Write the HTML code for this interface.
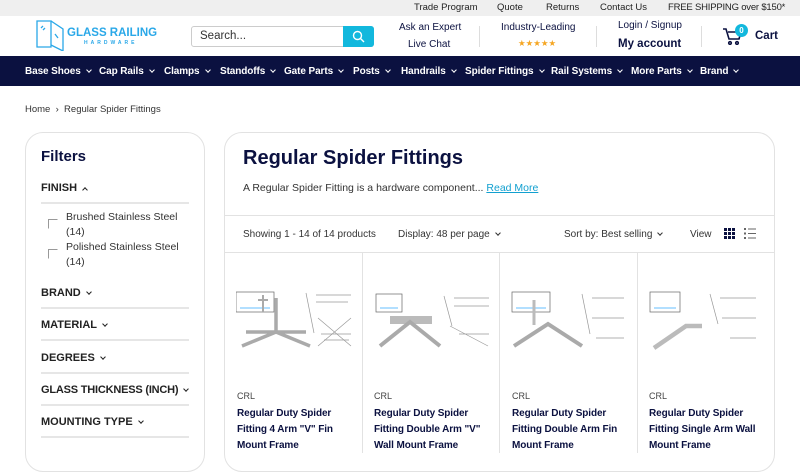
<!DOCTYPE html>
<html><head><meta charset="utf-8"><style>
*{box-sizing:border-box;margin:0;padding:0}
body{width:800px;height:450px;overflow:hidden;font-family:"Liberation Sans",Arial,sans-serif;background:#fff;color:#1a1a1a;position:relative}
.a{position:absolute;white-space:nowrap}
.top{position:absolute;left:0;top:0;width:800px;height:16px;background:#efefef;font-size:9.5px;color:#222}
.nav{position:absolute;left:0;top:56px;width:800px;height:30px;background:#0b1140;color:#fff;font-size:10px;font-weight:bold;letter-spacing:-0.1px}
.chev{display:inline-block;width:4px;height:4px;border-right:1.5px solid currentColor;border-bottom:1.5px solid currentColor;transform:rotate(45deg);margin-left:6px;position:relative;top:-2px}
.card{position:absolute;border:1px solid #e2e2e2;border-radius:18px}
.navy{color:#0b1140}
.f{font-size:11px;font-weight:bold;color:#222}
.hr{position:absolute;height:2px;background:#e6e6e6}
.cb{position:absolute;width:10px;height:10px;border:1px solid #999;border-right-color:#fff;border-bottom-color:#fff}
.pt{font-size:10px;font-weight:bold;color:#0b1140;line-height:16px;white-space:normal;width:118px;letter-spacing:-0.1px}
</style></head><body>
<div class="top">
<span class="a" style="left:414px;top:2px">Trade Program</span>
<span class="a" style="left:497px;top:2px">Quote</span>
<span class="a" style="left:546px;top:2px">Returns</span>
<span class="a" style="left:600px;top:2px">Contact Us</span>
<span class="a" style="left:668px;top:2px;letter-spacing:-0.2px">FREE SHIPPING over $150*</span>
</div>
<svg class="a" style="left:35px;top:18px" width="30" height="33" viewBox="0 0 30 33" fill="none" stroke="#2aa8e8" stroke-width="1.3"><path d="M2 3h14v26H2z"/><path d="M16 3l12 8v22l-12-6"/><path d="M6 10l2-2M8 12l2-2M20 16l3 4"/></svg>
<span class="a" style="left:67px;top:27px;font-size:11.5px;font-weight:bold;color:#2aa8e8">GLASS RAILING</span>
<span class="a" style="left:84px;top:40px;font-size:5px;letter-spacing:3px;color:#2aa8e8;font-weight:bold">HARDWARE</span>
<div class="a" style="left:191px;top:26px;width:183px;height:21px;border:1px solid #ccc;border-radius:3px"></div>
<span class="a" style="left:200px;top:30px;font-size:11.5px;color:#333">Search...</span>
<div class="a" style="left:343px;top:26px;width:31px;height:21px;background:#12b8dd;border-radius:0 3px 3px 0"></div>
<svg class="a" style="left:352px;top:30px" width="13" height="13" viewBox="0 0 13 13" fill="none" stroke="#fff" stroke-width="1.4"><circle cx="5.5" cy="5.5" r="4"/><path d="M8.5 8.5l3.5 3.5"/></svg>
<span class="a" style="left:399px;top:22px;font-size:10px;color:#0b1140">Ask an Expert</span>
<span class="a" style="left:408px;top:39px;font-size:10px;color:#0b1140">Live Chat</span>
<div class="a" style="left:479px;top:26px;width:1px;height:21px;background:#ddd"></div>
<span class="a" style="left:501px;top:22px;font-size:10px;color:#0b1140">Industry-Leading</span>
<span class="a" style="left:518px;top:38px;font-size:8.5px;color:#f5a623">★★★★★</span>
<div class="a" style="left:596px;top:26px;width:1px;height:21px;background:#ddd"></div>
<span class="a" style="left:618px;top:20px;font-size:10px;color:#0b1140">Login / Signup</span>
<span class="a" style="left:618px;top:38px;font-size:11.5px;font-weight:bold;color:#0b1140">My account</span>
<div class="a" style="left:701px;top:26px;width:1px;height:21px;background:#ddd"></div>
<svg class="a" style="left:722px;top:27px" width="20" height="18" viewBox="0 0 20 18" fill="none" stroke="#0b1140" stroke-width="1.6"><path d="M1 2h3l3 10h10l2-7H6"/><circle cx="8" cy="16" r="1.3"/><circle cx="15" cy="16" r="1.3"/></svg>
<div class="a" style="left:735px;top:24px;width:13px;height:13px;border-radius:50%;background:#12b8dd;color:#fff;font-size:8px;text-align:center;line-height:13px;font-weight:bold">0</div>
<span class="a" style="left:755px;top:30px;font-size:11.5px;font-weight:bold;color:#0b1140">Cart</span>
<div class="nav">
<span class="a" style="left:25px;top:10px">Base Shoes<i class="chev"></i></span>
<span class="a" style="left:99px;top:10px">Cap Rails<i class="chev"></i></span>
<span class="a" style="left:164px;top:10px">Clamps<i class="chev"></i></span>
<span class="a" style="left:220px;top:10px">Standoffs<i class="chev"></i></span>
<span class="a" style="left:284px;top:10px">Gate Parts<i class="chev"></i></span>
<span class="a" style="left:353px;top:10px">Posts<i class="chev"></i></span>
<span class="a" style="left:401px;top:10px">Handrails<i class="chev"></i></span>
<span class="a" style="left:465px;top:10px">Spider Fittings<i class="chev"></i></span>
<span class="a" style="left:551px;top:10px">Rail Systems<i class="chev"></i></span>
<span class="a" style="left:631px;top:10px">More Parts<i class="chev"></i></span>
<span class="a" style="left:700px;top:10px">Brand<i class="chev"></i></span>
</div>
<span class="a" style="left:25px;top:104px;font-size:9.5px;color:#333">Home &nbsp;›&nbsp; Regular Spider Fittings</span>
<div class="card" style="left:25px;top:132px;width:180px;height:340px"></div>
<span class="a navy" style="left:41px;top:148px;font-size:15px;font-weight:bold">Filters</span>
<span class="a f" style="left:41px;top:182px">FINISH<i class="chev" style="transform:rotate(225deg);top:1px"></i></span>
<div class="hr" style="left:41px;top:202px;width:148px"></div>
<div class="cb" style="left:48px;top:219px"></div>
<span class="a" style="left:66px;top:210px;font-size:10.5px;color:#333;line-height:15px">Brushed Stainless Steel<br>(14)</span>
<div class="cb" style="left:48px;top:249px"></div>
<span class="a" style="left:66px;top:240px;font-size:10.5px;color:#333;line-height:15px">Polished Stainless Steel<br>(14)</span>
<span class="a f" style="left:41px;top:287px">BRAND<i class="chev"></i></span>
<div class="hr" style="left:41px;top:307px;width:148px"></div>
<span class="a f" style="left:41px;top:319px">MATERIAL<i class="chev"></i></span>
<div class="hr" style="left:41px;top:339px;width:148px"></div>
<span class="a f" style="left:41px;top:352px">DEGREES<i class="chev"></i></span>
<div class="hr" style="left:41px;top:372px;width:148px"></div>
<span class="a f" style="left:41px;top:384px;letter-spacing:-0.2px">GLASS THICKNESS (INCH)<i class="chev"></i></span>
<div class="hr" style="left:41px;top:404px;width:148px"></div>
<span class="a f" style="left:41px;top:416px">MOUNTING TYPE<i class="chev"></i></span>
<div class="hr" style="left:41px;top:436px;width:148px"></div>

<div class="card" style="left:224px;top:132px;width:551px;height:340px"></div>
<span class="a navy" style="left:243px;top:147px;font-size:20px;font-weight:bold">Regular Spider Fittings</span>
<span class="a" style="left:243px;top:182px;font-size:10.5px;color:#333">A Regular Spider Fitting is a hardware component... <u style="color:#12a0d0">Read More</u></span>
<div class="a" style="left:225px;top:215px;width:549px;height:1px;background:#e2e2e2"></div>
<span class="a" style="left:243px;top:229px;font-size:10px;color:#333">Showing 1 - 14 of 14 products</span>
<span class="a" style="left:398px;top:229px;font-size:10px;color:#333">Display: 48 per page<i class="chev" style="width:4px;height:4px"></i></span>
<span class="a" style="left:564px;top:229px;font-size:10px;color:#333">Sort by: Best selling<i class="chev" style="width:4px;height:4px"></i></span>
<span class="a" style="left:690px;top:229px;font-size:10px;color:#333">View</span>
<svg class="a" style="left:724px;top:228px" width="11" height="11"><g fill="#0b1140"><rect x="0" y="0" width="3" height="3"/><rect x="4" y="0" width="3" height="3"/><rect x="8" y="0" width="3" height="3"/><rect x="0" y="4" width="3" height="3"/><rect x="4" y="4" width="3" height="3"/><rect x="8" y="4" width="3" height="3"/><rect x="0" y="8" width="3" height="3"/><rect x="4" y="8" width="3" height="3"/><rect x="8" y="8" width="3" height="3"/></g></svg>
<svg class="a" style="left:744px;top:228px" width="12" height="11" fill="#666"><rect x="0" y="0" width="2" height="2"/><rect x="4" y="0.5" width="8" height="1"/><rect x="0" y="4.5" width="2" height="2"/><rect x="4" y="5" width="8" height="1"/><rect x="0" y="9" width="2" height="2"/><rect x="4" y="9.5" width="8" height="1"/></svg>
<div class="a" style="left:225px;top:252px;width:549px;height:1px;background:#e2e2e2"></div>
<div class="a" style="left:362px;top:253px;width:1px;height:200px;background:#e2e2e2"></div>
<div class="a" style="left:499px;top:253px;width:1px;height:200px;background:#e2e2e2"></div>
<div class="a" style="left:637px;top:253px;width:1px;height:200px;background:#e2e2e2"></div>

<svg class="a" style="left:236px;top:290px" width="520" height="64" fill="none" stroke="#888" stroke-width="0.7">
<g><rect x="0" y="2" width="38" height="20" stroke="#666"/><path d="M4 18h30" stroke="#3af"/><path d="M27 5v17M22 10h10" stroke="#aaa" stroke-width="2"/><path d="M40 8v35M6 56l34-14 34 14M10 42l30 0 30 0" stroke="#aaa" stroke-width="3.5"/><path d="M70 3l8 40M80 5h35M80 12h32M82 28l33 28M115 28l-33 28M85 44h30M88 50h25" stroke="#999"/></g>
<g transform="translate(138,0)"><rect x="2" y="4" width="26" height="18" stroke="#666"/><path d="M6 18h18" stroke="#3af"/><path d="M16 30h42" stroke="#bbb" stroke-width="8"/><path d="M6 56l30-24 30 24" stroke="#aaa" stroke-width="4"/><path d="M70 6l8 30M80 8h35M80 16h35M76 36l38 20M85 44h30" stroke="#999"/></g>
<g transform="translate(276,0)"><rect x="0" y="2" width="38" height="20" stroke="#666"/><path d="M4 18h30" stroke="#3af"/><path d="M22 10v25" stroke="#bbb" stroke-width="3"/><path d="M2 56l34-22 34 22" stroke="#aaa" stroke-width="4"/><path d="M70 4l8 40M80 8h32M80 28h32M84 48h28" stroke="#999"/></g>
<g transform="translate(414,0)"><rect x="0" y="2" width="30" height="20" stroke="#666"/><path d="M4 18h22" stroke="#3af"/><path d="M4 58l32-22h16" stroke="#bbb" stroke-width="4.5"/><path d="M60 4l8 30M70 8h40M72 28h40M80 48h30" stroke="#999"/></g>
</svg>
<span class="a" style="left:237px;top:391px;font-size:9px;color:#444">CRL</span>
<span class="a" style="left:374px;top:391px;font-size:9px;color:#444">CRL</span>
<span class="a" style="left:512px;top:391px;font-size:9px;color:#444">CRL</span>
<span class="a" style="left:649px;top:391px;font-size:9px;color:#444">CRL</span>
<div class="a pt" style="left:237px;top:406px">Regular Duty Spider Fitting 4 Arm "V" Fin Mount Frame</div>
<div class="a pt" style="left:374px;top:406px">Regular Duty Spider Fitting Double Arm "V" Wall Mount Frame</div>
<div class="a pt" style="left:512px;top:406px">Regular Duty Spider Fitting Double Arm Fin Mount Frame</div>
<div class="a pt" style="left:649px;top:406px;width:112px">Regular Duty Spider Fitting Single Arm Wall Mount Frame</div>
</body></html>
